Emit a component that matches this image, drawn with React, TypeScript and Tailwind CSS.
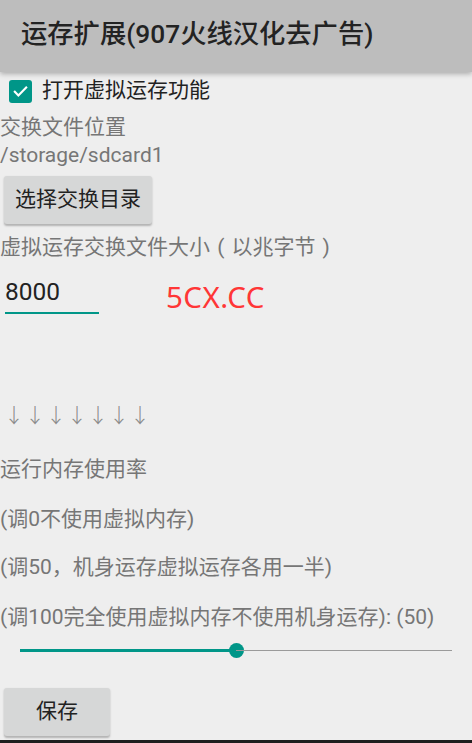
import React from 'react';

const font = "font-['Roboto','Noto_Sans_CJK_SC',sans-serif]";

const GrayLine = ({ children, className = '' }: { children: React.ReactNode; className?: string }) => (
    <div className={`text-[21px] leading-[28px] text-[#767676] ${className}`}>{children}</div>
);

const Button = ({ label, className = '' }: { label: string; className?: string }) => (
    <div
        className={`flex h-[48px] items-center justify-center rounded-[3px] bg-[#d6d7d7] text-[21px] text-[#222] shadow-[0_1.5px_2px_rgba(0,0,0,0.25)] ${className}`}
    >
        {label}
    </div>
);

// full-width paren box with the glyph centred, like the device font
const Paren = ({ ch }: { ch: string }) => <span className="inline-block w-[21.5px] text-center">{ch}</span>;

const App = () => {
    return (
        <div className={`flex h-[743px] w-[472px] flex-col overflow-hidden bg-[#eeeeee] ${font}`}>
            <div className="relative z-10 flex h-[72px] shrink-0 items-center bg-[#bdbdbd] pl-[21px] pb-[2px] shadow-[0_2px_5px_rgba(0,0,0,0.28)]">
                <span className="text-[26.3px] font-medium text-[#232323]">运存扩展(907火线汉化去广告)</span>
            </div>

            <div className="flex h-[38px] items-center pl-[9px]">
                <div className="flex h-[23px] w-[23px] items-center justify-center rounded-[3px] bg-[#009688]">
                    <svg width="17" height="17" viewBox="0 0 24 24" fill="none">
                        <path d="M4 12.5l5 5L20 6.5" stroke="#fff" strokeWidth="3" strokeLinecap="square" />
                    </svg>
                </div>
                <span className="ml-[10px] text-[21px] text-[#222]">打开虚拟运存功能</span>
            </div>

            <GrayLine className="mt-[3px]">交换文件位置</GrayLine>
            <GrayLine>/storage/sdcard1</GrayLine>

            <Button label="选择交换目录" className="ml-[4px] mt-[7px] w-[148px]" />

            <GrayLine className="mt-[9px]">
                虚拟运存交换文件大小
                <Paren ch="(" />
                以兆字节
                <Paren ch=")" />
            </GrayLine>

            <div className="mt-[15px] flex items-start">
                <div className="ml-[5px] w-[94px] border-b-2 border-[#009688] pb-[4px] text-[24.5px] leading-[32px] text-[#222]">
                    8000
                </div>
                <div className="ml-[67px] mt-[2px] font-['Noto_Sans',sans-serif] text-[29.5px] leading-[38px] tracking-[0.5px] text-[#ff3636]">
                    5CX.CC
                </div>
            </div>

            <div className="ml-[4px] mt-[85px] flex font-['Noto_Sans_CJK_SC',sans-serif] text-[20px] font-light leading-[28px] text-[#8a8a8a]">
                {Array.from({ length: 7 }).map((_, i) => (
                    <span key={i} className="w-[21px]">
                        ↓
                    </span>
                ))}
            </div>

            <GrayLine className="mt-[26px]">运行内存使用率</GrayLine>
            <GrayLine className="mt-[22px]">(调0不使用虚拟内存)</GrayLine>
            <GrayLine className="mt-[20px]">(调50，机身运存虚拟运存各用一半)</GrayLine>
            <GrayLine className="mt-[22px]">(调100完全使用虚拟内存不使用机身运存): (50)</GrayLine>

            <div className="ml-[20px] mt-[9px] flex h-[20px] w-[432px] items-center">
                <div className="h-[3px] w-[216px] bg-[#009688]" />
                <div className="-mx-[7.5px] h-[15px] w-[15px] shrink-0 rounded-full bg-[#009688]" />
                <div className="h-px flex-1 bg-[#9a9a9a]" />
            </div>

            <Button label="保存" className="ml-[4px] mt-[28px] w-[106px]" />

            <div className="mt-auto h-[3px] bg-[#1e1e1e]" />
        </div>
    );
};

export default App;
